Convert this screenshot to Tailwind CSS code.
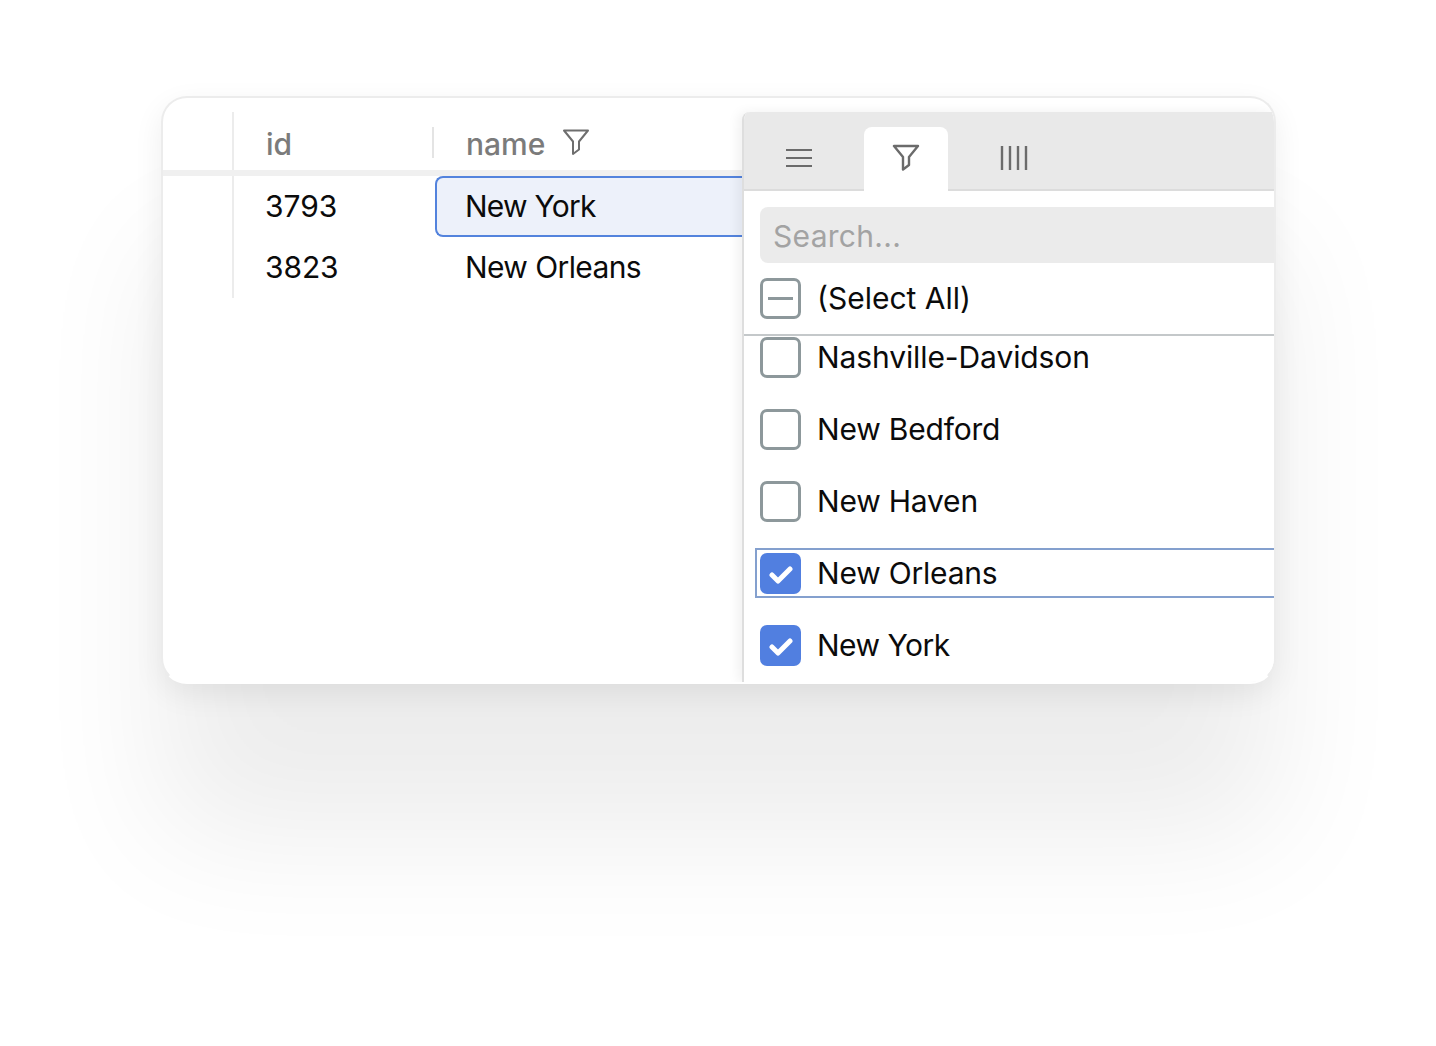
<!DOCTYPE html>
<html lang="en">
<head>
  <meta charset="UTF-8">
  <title>Set filter</title>
  <script src="https://cdn.jsdelivr.net/npm/@tailwindcss/browser@4"></script>
</head>
<body class="bg-white font-['Inter',sans-serif] text-[30px] text-[#0b0b0b] overflow-hidden">
  <div class="w-[1436px] h-[1046px] pt-[96px] pl-[161px]">
    <div class="relative w-[1115px] h-[588px] rounded-[26px] border-2 border-[#ececec] border-b-white bg-white overflow-hidden shadow-[0_10px_30px_rgba(0,0,0,0.07),0_150px_130px_rgba(0,0,0,0.075)]">

      <!-- Grid -->
      <div class="pt-[14px]">
        <div class="flex h-[58px] text-[#7b7b7b] font-medium">
          <div class="w-[69px]"></div>
          <div class="w-[202px] flex items-center pl-[32px] pt-[6px] border-l-2 border-[#ececec] relative">id
            <span class="absolute right-0 top-[15px] h-[31px] w-[2px] bg-[#e4e4e4]"></span>
          </div>
          <div class="flex items-center pl-[32px] pt-[6px] gap-[17px]">name
            <svg class="w-[28px] h-[28px] -mt-[5px]" viewBox="0 0 28 28" fill="none" stroke="#6e6e6e" stroke-width="2" stroke-linejoin="round"><path d="M2 2.5h24L17 13.5v8l-6 4.5V13.5z"/></svg>
          </div>
        </div>
        <div class="h-[6px] bg-[#f0f0f0]"></div>
        <div class="flex h-[61px]">
          <div class="w-[69px]"></div>
          <div class="w-[203px] flex items-center pl-[31px] border-l-2 border-[#ececec]">3793</div>
          <div class="w-[310px] flex items-center pl-[28px] bg-[#edf1fa] border-2 border-r-0 border-[#5383dd] rounded-l-[8px] tracking-[-0.75px]">New York</div>
        </div>
        <div class="flex h-[61px]">
          <div class="w-[69px]"></div>
          <div class="w-[203px] flex items-center pl-[31px] border-l-2 border-[#ececec] tracking-[-0.1px]">3823</div>
          <div class="flex items-center pl-[30px] tracking-[-0.6px]">New Orleans</div>
        </div>
      </div>

      <!-- Filter menu -->
      <div class="absolute left-[579px] top-[14px] right-0 bottom-0 bg-white border-l-2 border-[#dedede] rounded-tl-[8px] shadow-[-4px_0_12px_rgba(0,0,0,0.06)] overflow-hidden">
        <div class="flex h-[79px] bg-[#e9e9e9] border-b-2 border-[#dcdcdc] pt-[15px]">
          <div class="w-[120px] flex items-center pl-[41px]">
            <svg class="w-[28px] h-[20px] -mt-[1px]" viewBox="0 0 28 20" fill="none" stroke="#6b6b6b" stroke-width="2.2"><path d="M1 2h26M1 10h26M1 18h26"/></svg>
          </div>
          <div class="w-[84px] h-[64px] bg-white rounded-t-[8px] flex items-center justify-center">
            <svg class="w-[28px] h-[28px] -mt-[4px]" viewBox="0 0 28 28" fill="none" stroke="#6b6b6b" stroke-width="2.4" stroke-linejoin="round"><path d="M2 3h24L17 14v8l-6 4.5V14z"/></svg>
          </div>
          <div class="w-[132px] flex items-center justify-center">
            <svg class="w-[28px] h-[24px]" viewBox="0 0 28 24" fill="none" stroke="#6b6b6b" stroke-width="2.4"><path d="M2 0v24M10 0v24M18 0v24M26 0v24"/></svg>
          </div>
        </div>

        <div class="pl-[16px] pt-[16px]">
          <div class="h-[56px] bg-[#ebebeb] rounded-l-[8px] flex items-center pl-[13px] pt-[3px] text-[#a3a3a3] tracking-[0.3px]">Search...</div>
        </div>

        <div class="h-[73px] flex items-center pl-[16px] gap-[16px] border-b-2 border-[#c4c8ca]">
          <span class="w-[41px] h-[41px] mt-[-1px] rounded-[7px] border-[3px] border-[#8d989b] flex items-center justify-center">
            <span class="w-[25px] h-[3px] bg-[#8d989b]"></span>
          </span>
          <span class="mt-[-1px]">(Select All)</span>
        </div>

        <div class="mt-[-15px]">
          <div class="h-[72px] flex items-center pl-[16px] gap-[16px]">
            <span class="w-[41px] h-[41px] rounded-[7px] border-[3px] border-[#8d989b] bg-white z-10 mt-[1px]"></span>
            <span class="relative z-10 tracking-[-0.1px]">Nashville-Davidson</span>
          </div>
          <div class="h-[72px] flex items-center pl-[16px] gap-[16px]">
            <span class="w-[41px] h-[41px] rounded-[7px] border-[3px] border-[#8d989b] mt-[1px]"></span>
            <span class="tracking-[-0.2px]">New Bedford</span>
          </div>
          <div class="h-[72px] flex items-center pl-[16px] gap-[16px]">
            <span class="w-[41px] h-[41px] rounded-[7px] border-[3px] border-[#8d989b] mt-[1px]"></span>
            <span class="tracking-[-0.2px]">New Haven</span>
          </div>
          <div class="h-[72px] flex items-center">
            <div class="w-full h-[50px] ml-[11px] flex items-center pl-[3px] gap-[16px] border-2 border-r-0 border-[#84a0ce]">
              <span class="w-[41px] h-[41px] rounded-[7px] bg-[#517fe0] flex items-center justify-center">
                <svg class="w-[24px] h-[20px] mt-[3px]" viewBox="0 0 24 20" fill="none" stroke="#fff" stroke-width="5" stroke-linecap="round" stroke-linejoin="round"><path d="M3 10l6 6L21 4"/></svg>
              </span>
              <span class="tracking-[-0.2px]">New Orleans</span>
            </div>
          </div>
          <div class="h-[72px] flex items-center pl-[16px] gap-[16px]">
            <span class="w-[41px] h-[41px] rounded-[7px] bg-[#517fe0] flex items-center justify-center">
              <svg class="w-[24px] h-[20px] mt-[3px]" viewBox="0 0 24 20" fill="none" stroke="#fff" stroke-width="5" stroke-linecap="round" stroke-linejoin="round"><path d="M3 10l6 6L21 4"/></svg>
            </span>
            <span class="tracking-[-0.5px]">New York</span>
          </div>
        </div>
      </div>
    </div>
  </div>
</body>
</html>
